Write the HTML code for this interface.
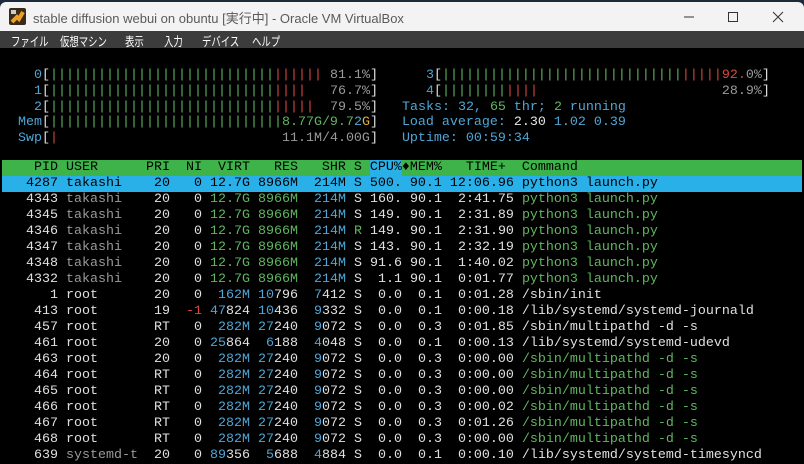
<!DOCTYPE html>
<html><head><meta charset="utf-8"><style>
html,body{margin:0;padding:0;width:804px;height:464px;overflow:hidden;background:#1d2a3a;}
#win{position:absolute;left:0;top:2px;width:804px;height:462px;background:#000;border-radius:6px 6px 0 0;overflow:hidden;}
#title{position:absolute;left:0;top:0;width:804px;height:29px;background:#f3f3f3;font-family:"Liberation Sans","Noto Sans CJK JP",sans-serif;font-size:13px;color:#5a5a5a;}
#title .t{position:absolute;left:33px;top:6px;white-space:nowrap;}
#menu{position:absolute;left:0;top:29px;width:804px;height:17px;background:#3c3c3c;font-family:"Liberation Sans","Noto Sans CJK JP",sans-serif;font-size:12.5px;color:#fff;}
#menu span{position:absolute;top:0px;white-space:nowrap;transform:scaleX(0.75);transform-origin:0 0;}
#term{position:absolute;left:2px;top:46px;width:800px;height:416px;background:#000;}
pre{margin:0;position:absolute;left:16px;font-family:"Liberation Mono","DejaVu Sans Mono",monospace;font-size:13.33px;color:#e0e0e0;white-space:pre;}
.m{line-height:15.8px;top:20px;}
.p{line-height:16px;top:112px;}
.c{color:#4ea6d6}.g{color:#5fb760}.r{color:#d9483f}.d{color:#9a9a9a}.w{color:#e6e6e6}.y{color:#e0b040}
.hb{position:absolute;left:0;top:112px;width:800px;height:16px;background:#3db34a;}
.hc{position:absolute;left:368px;top:112px;width:32px;height:16px;background:#29b0e6;}
.sel{position:absolute;left:0;top:128px;width:800px;height:16px;background:#2ab0e8;}
.k{color:#000}
</style></head><body>
<div id="win">
<div id="title">
<svg style="position:absolute;left:9px;top:6px" width="17" height="17" viewBox="0 0 17 17"><rect x="0" y="0" width="17" height="17" rx="2" fill="#3a2a1a"/><path d="M3 14 L8 9 L10 11 L14 4" stroke="#f0a020" stroke-width="4" fill="none"/><rect x="2" y="2" width="5" height="4" fill="#ccc"/></svg>
<span class="t">stable diffusion webui on obuntu [実行中] - Oracle VM VirtualBox</span>
<svg style="position:absolute;left:684px;top:8px" width="110" height="14" viewBox="0 0 110 14"><line x1="0" y1="7" x2="10" y2="7" stroke="#333" stroke-width="1"/><rect x="44.5" y="2.5" width="9" height="9" fill="none" stroke="#333"/><path d="M89 2 L99 12 M99 2 L89 12" stroke="#333" stroke-width="1"/></svg>
</div>
<div id="menu"><span style="left:11px">ファイル</span><span style="left:60px">仮想マシン</span><span style="left:125px">表示</span><span style="left:164px">入力</span><span style="left:202px">デバイス</span><span style="left:252px">ヘルプ</span></div>
<div id="term">
<pre class="m"><span class="c">  0</span>[<span class="g">||||||||||||||||||||||||||||</span><span class="r">||||||</span> <span class="d">81.1%</span>]    <span class="c">  3</span>[<span class="g">||||||||||||||||||||||||||||||</span><span class="r">|||||92.</span><span class="d">0%</span>]
<span class="c">  1</span>[<span class="g">||||||||||||||||||||||||||||</span><span class="r">||||</span>   <span class="d">76.7%</span>]    <span class="c">  4</span>[<span class="g">||||||||</span><span class="r">||||</span>                       <span class="d">28.9%</span>]
<span class="c">  2</span>[<span class="g">||||||||||||||||||||||||||||</span><span class="r">|||||</span>  <span class="d">79.5%</span>]   <span class="c">Tasks: 32, </span><span class="g">65</span><span class="c"> thr; </span><span class="g">2</span><span class="c"> running</span>
<span class="c">Mem</span>[<span class="g">|||||||||||||||||||||||||||||8.77G/9.7</span><span class="c">2</span><span class="y">G</span>]   <span class="c">Load average: </span><span class="w">2.30 </span><span class="c">1.02 0.39</span>
<span class="c">Swp</span>[<span class="r">|</span>                            <span class="d">11.1M/4.00G</span>]   <span class="c">Uptime: 00:59:34</span></pre>
</div>
<div id="term2" style="position:absolute;left:2px;top:46px;width:800px;height:416px;">
<div class="hb"></div><div class="hc"></div><div class="sel"></div>
<pre class="p"><span class="k">  PID USER      PRI  NI  VIRT   RES   SHR S CPU%♦MEM%   TIME+  Command</span>
<span class="k"> 4287 takashi    20   0 12.7G 8966M  214M S 500. 90.1 12:06.96 python3 launch.py</span>
 4343 <span class="d">takashi</span>    20   0 <span class="g">12.7G 8966M</span>  <span class="c">214M</span> S 160. 90.1  2:41.75 <span class="g">python3 launch.py</span>
 4345 <span class="d">takashi</span>    20   0 <span class="g">12.7G 8966M</span>  <span class="c">214M</span> S 149. 90.1  2:31.89 <span class="g">python3 launch.py</span>
 4346 <span class="d">takashi</span>    20   0 <span class="g">12.7G 8966M</span>  <span class="c">214M</span> <span class="g">R</span> 149. 90.1  2:31.90 <span class="g">python3 launch.py</span>
 4347 <span class="d">takashi</span>    20   0 <span class="g">12.7G 8966M</span>  <span class="c">214M</span> S 143. 90.1  2:32.19 <span class="g">python3 launch.py</span>
 4348 <span class="d">takashi</span>    20   0 <span class="g">12.7G 8966M</span>  <span class="c">214M</span> S 91.6 90.1  1:40.02 <span class="g">python3 launch.py</span>
 4332 <span class="d">takashi</span>    20   0 <span class="g">12.7G 8966M</span>  <span class="c">214M</span> S  1.1 90.1  0:01.77 <span class="g">python3 launch.py</span>
    1 root       20   0  <span class="c">162M</span> <span class="c">10</span>796  <span class="c">7</span>412 S  0.0  0.1  0:01.28 /sbin/init
  413 root       19  <span class="r">-1</span> <span class="c">47</span>824 <span class="c">10</span>436  <span class="c">9</span>332 S  0.0  0.1  0:00.18 /lib/systemd/systemd-journald
  457 root       RT   0  <span class="c">282M</span> <span class="c">27</span>240  <span class="c">9</span>072 S  0.0  0.3  0:01.85 /sbin/multipathd -d -s
  461 root       20   0 <span class="c">25</span>864  <span class="c">6</span>188  <span class="c">4</span>048 S  0.0  0.1  0:00.13 /lib/systemd/systemd-udevd
  463 root       20   0  <span class="c">282M</span> <span class="c">27</span>240  <span class="c">9</span>072 S  0.0  0.3  0:00.00 <span class="g">/sbin/multipathd -d -s</span>
  464 root       RT   0  <span class="c">282M</span> <span class="c">27</span>240  <span class="c">9</span>072 S  0.0  0.3  0:00.00 <span class="g">/sbin/multipathd -d -s</span>
  465 root       RT   0  <span class="c">282M</span> <span class="c">27</span>240  <span class="c">9</span>072 S  0.0  0.3  0:00.00 <span class="g">/sbin/multipathd -d -s</span>
  466 root       RT   0  <span class="c">282M</span> <span class="c">27</span>240  <span class="c">9</span>072 S  0.0  0.3  0:00.02 <span class="g">/sbin/multipathd -d -s</span>
  467 root       RT   0  <span class="c">282M</span> <span class="c">27</span>240  <span class="c">9</span>072 S  0.0  0.3  0:01.26 <span class="g">/sbin/multipathd -d -s</span>
  468 root       RT   0  <span class="c">282M</span> <span class="c">27</span>240  <span class="c">9</span>072 S  0.0  0.3  0:00.00 <span class="g">/sbin/multipathd -d -s</span>
  639 <span class="d">systemd-t</span>  20   0 <span class="c">89</span>356  <span class="c">5</span>688  <span class="c">4</span>884 S  0.0  0.1  0:00.10 /lib/systemd/systemd-timesyncd</pre>
</div>
</div>
</body></html>
